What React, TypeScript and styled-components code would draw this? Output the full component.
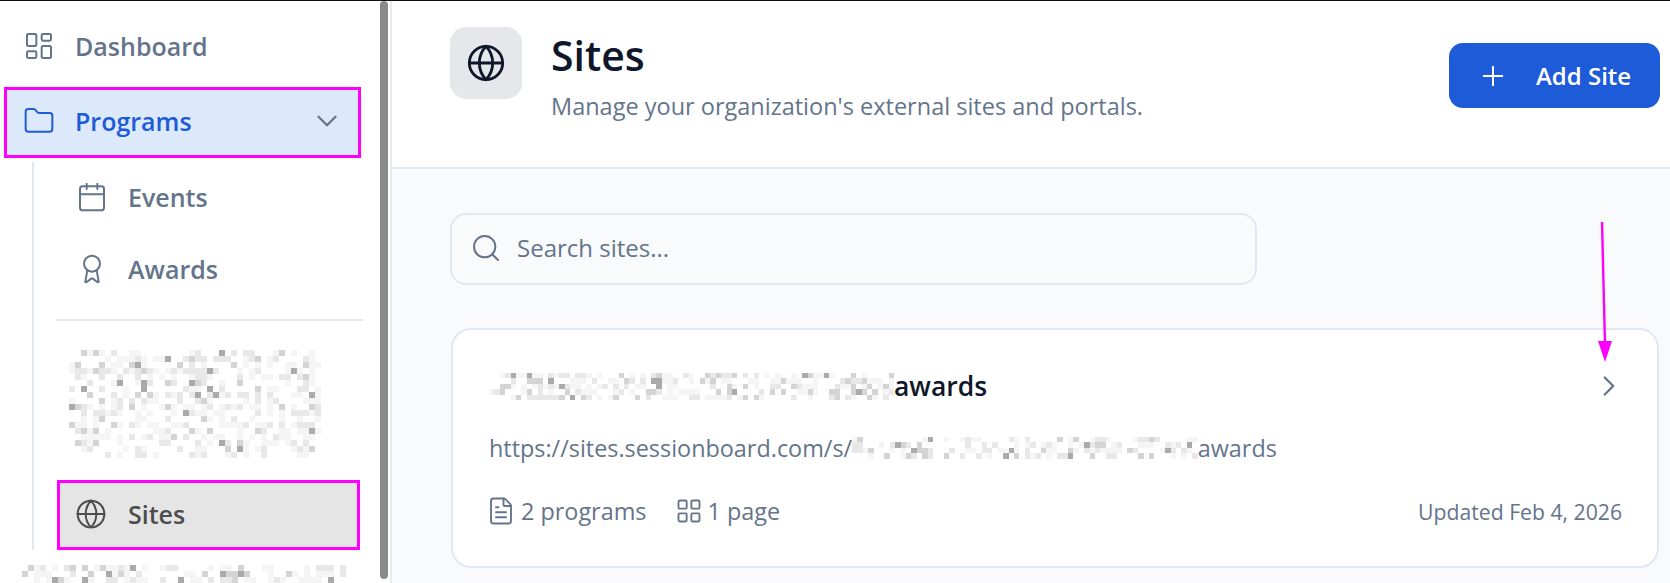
import React from "react";
import styled, { createGlobalStyle } from "styled-components";
import {
  Award,
  Calendar,
  ChevronDown,
  ChevronRight,
  FileText,
  Folder,
  Globe,
  LayoutDashboard,
  LayoutGrid,
  Plus,
  Search,
} from "lucide-react";

const GlobalStyle = createGlobalStyle`
  html, body {
    margin: 0;
    padding: 0;
    height: 583px;
    overflow: hidden;
    background: #fff;
    font-family: "Open Sans", "Liberation Sans", sans-serif;
  }
  * { box-sizing: border-box; }
`;

const Page = styled.div`
  width: 1670px;
  height: 583px;
  display: flex;
  border-top: 1px solid #111;
  position: relative;
  overflow: hidden;
`;

const Sidebar = styled.aside`
  width: 392px;
  height: 582px;
  flex: none;
  padding: 9px 29px 0 4px;
  border-right: 2px solid #e8ebf0;
  position: relative;
  background: #fff;
`;

const ScrollThumb = styled.div`
  position: absolute;
  top: 0;
  left: 380px;
  width: 8px;
  height: 578px;
  border-radius: 4px;
  background: #8a8a8a;
`;

const NavRow = styled.div<{ $active?: boolean }>`
  height: 71px;
  display: flex;
  align-items: center;
  gap: 20px;
  padding: 0 14px 0 19px;
  font-size: 25px;
  font-weight: 600;
  color: ${(p) => (p.$active ? "#1d5bd8" : "#64748b")};
  ${(p) => p.$active && "margin-top: 6px; background: #dce9fa; border: 3px solid #ff00ff; padding: 0 14px 4px 16px;"}
`;

const NavLabel = styled.span`
  flex: 1;
`;

const SubNav = styled.div`
  margin: 4px 0 0 28px;
  padding-left: 23px;
  height: 388px;
  border-left: 2px solid #e2e8f0;
  display: flex;
  flex-direction: column;
`;

const SubRow = styled.div<{ $current?: boolean }>`
  height: ${(p) => (p.$current ? "70px" : "72px")};
  flex: none;
  display: flex;
  align-items: center;
  gap: ${(p) => (p.$current ? "21px" : "20px")};
  padding: 0 0 2px ${(p) => (p.$current ? "15px" : "19px")};
  font-size: 25px;
  font-weight: 600;
  color: ${(p) => (p.$current ? "#4d4d4d" : "#64748b")};
  ${(p) => p.$current && "background: #e5e5e5; border: 3px solid #ff00ff; margin-right: 1px;"}
`;

const SubDivider = styled.hr`
  border: 0;
  height: 2px;
  width: 307px;
  background: #e2e8f0;
  margin: 13px 0 0 -1px;
  flex: none;
`;

const BlurBox = styled.div`
  margin: 29px 0 22px 12px;
  line-height: 0;
`;

const BottomBlur = styled.div`
  margin: 15px 0 0 18px;
  line-height: 0;
`;

const Main = styled.main`
  flex: 1;
  min-width: 0;
  background: #f8fafc;
`;

const Header = styled.header`
  height: 168px;
  background: #fff;
  border-bottom: 2px solid #e2e8f0;
  display: flex;
  align-items: flex-start;
  padding: 26px 10px 0 58px;
`;

const HeaderIcon = styled.div`
  width: 72px;
  height: 72px;
  flex: none;
  border-radius: 16px;
  background: #e5e7ea;
  color: #0f172a;
  display: flex;
  align-items: center;
  justify-content: center;
`;

const HeaderText = styled.div`
  margin-left: 29px;
  flex: 1;
`;

const Title = styled.h1`
  margin: 2px 0 0;
  font-size: 41px;
  line-height: 52px;
  font-weight: 600;
  color: #0f172a;
`;

const Subtitle = styled.p`
  margin: 10px 0 0;
  font-size: 23.5px;
  line-height: 30px;
  color: #64748b;
`;

const AddButton = styled.button`
  width: 211px;
  height: 65px;
  margin-top: 16px;
  border: 0;
  border-radius: 14px;
  background: #1d5bd8;
  color: #fff;
  font: 600 24px "Open Sans", sans-serif;
  display: flex;
  align-items: center;
  gap: 27px;
  padding: 0 0 0 28px;
`;

const Content = styled.div`
  padding: 44px 11px 0 59px;
`;

const SearchBar = styled.div`
  width: 807px;
  height: 72px;
  margin-left: -1px;
  border: 2px solid #e2e8f0;
  border-radius: 16px;
  display: flex;
  align-items: center;
  gap: 15px;
  padding: 0 0 3px 18px;
  color: #64748b;
  font-size: 24px;
`;

const Card = styled.article`
  margin-top: 43px;
  height: 240px;
  background: #fff;
  border: 2px solid #e2e8f0;
  border-radius: 20px;
  padding: 39px 31px 0 36px;
`;

const CardTop = styled.div`
  display: flex;
  align-items: center;
  justify-content: space-between;
  height: 34px;
`;

const CardTitle = styled.div`
  display: flex;
  align-items: center;
  font-size: 26.5px;
  font-weight: 600;
  color: #0f172a;
`;

const CardUrl = styled.div`
  display: flex;
  align-items: center;
  margin-top: 28px;
  height: 34px;
  font-size: 23.4px;
  color: #64748b;
`;

const CardFoot = styled.div`
  display: flex;
  align-items: center;
  margin-top: 30px;
  color: #64748b;
  font-size: 23.4px;
`;

const Stat = styled.span`
  display: flex;
  align-items: center;
  gap: 5px;
  margin-right: 29px;

  &:first-child {
    margin-left: -3px;
  }

  & + & {
    gap: 4px;
  }
`;

const Updated = styled.span`
  margin: 0 4px 0 auto;
  font-size: 21.2px;
`;

const Arrow = styled.svg`
  position: absolute;
  left: 1590px;
  top: 219px;
`;

const mosaicTone = (i: number, seed: number) => {
  const n = Math.sin((i + 1) * 12.9898 + seed * 78.233) * 43758.5453;
  const r = n - Math.floor(n);
  if (r < 0.5) return "#ffffff";
  if (r < 0.75) return "#f5f5f5";
  if (r < 0.9) return "#e8e8e8";
  if (r < 0.97) return "#d4d4d4";
  return "#aaaaaa";
};

// pixelated patches that hide the redacted names
function Mosaic({ cols, rows, cell, seed }: { cols: number; rows: number; cell: number; seed: number }) {
  const cells = [];
  for (let i = 0; i < cols * rows; i++) {
    cells.push(
      <rect
        key={i}
        x={(i % cols) * cell}
        y={Math.floor(i / cols) * cell}
        width={cell}
        height={cell}
        fill={mosaicTone(i, seed)}
      />
    );
  }
  return (
    <svg width={cols * cell} height={rows * cell} shapeRendering="crispEdges" style={{ flex: "none" }}>
      {cells}
    </svg>
  );
}

export default function App() {
  return (
    <Page>
      <GlobalStyle />
      <Sidebar>
        <ScrollThumb />
        <NavRow>
          <LayoutDashboard size={32} strokeWidth={1.5} />
          <NavLabel>Dashboard</NavLabel>
        </NavRow>
        <NavRow $active>
          <Folder size={32} strokeWidth={1.5} />
          <NavLabel>Programs</NavLabel>
          <ChevronDown size={34} strokeWidth={1.6} color="#64748b" />
        </NavRow>
        <SubNav>
          <SubRow>
            <Calendar size={32} strokeWidth={1.5} />
            Events
          </SubRow>
          <SubRow>
            <Award size={32} strokeWidth={1.5} />
            Awards
          </SubRow>
          <SubDivider />
          <BlurBox>
            <Mosaic cols={42} rows={18} cell={6} seed={3} />
          </BlurBox>
          <SubRow $current>
            <Globe size={32} strokeWidth={1.5} />
            Sites
          </SubRow>
        </SubNav>
        <BottomBlur>
          <Mosaic cols={54} rows={3} cell={6} seed={7} />
        </BottomBlur>
      </Sidebar>
      <Main>
        <Header>
          <HeaderIcon>
            <Globe size={40} strokeWidth={1.7} />
          </HeaderIcon>
          <HeaderText>
            <Title>Sites</Title>
            <Subtitle>Manage your organization's external sites and portals.</Subtitle>
          </HeaderText>
          <AddButton>
            <Plus size={32} strokeWidth={1.5} />
            Add Site
          </AddButton>
        </Header>
        <Content>
          <SearchBar>
            <Search size={32} strokeWidth={1.5} />
            Search sites...
          </SearchBar>
          <Card>
            <CardTop>
              <CardTitle>
                <Mosaic cols={75} rows={5} cell={5.4} seed={11} />
                awards
              </CardTitle>
              <ChevronRight size={34} strokeWidth={1.6} color="#64748b" />
            </CardTop>
            <CardUrl>
              https://sites.sessionboard.com/s/
              <Mosaic cols={64} rows={4} cell={5.4} seed={13} />
              awards
            </CardUrl>
            <CardFoot>
              <Stat>
                <FileText size={30} strokeWidth={1.5} />2 programs
              </Stat>
              <Stat>
                <LayoutGrid size={28} strokeWidth={1.6} />1 page
              </Stat>
              <Updated>Updated Feb 4, 2026</Updated>
            </CardFoot>
          </Card>
        </Content>
      </Main>
      <Arrow width="24" height="146" viewBox="0 0 24 146">
        <path d="M12 2 L15 125" stroke="#ff00ff" strokeWidth="2.4" fill="none" />
        <path d="M8 121 L22 121 L15 142 Z" fill="#ff00ff" />
      </Arrow>
    </Page>
  );
}
